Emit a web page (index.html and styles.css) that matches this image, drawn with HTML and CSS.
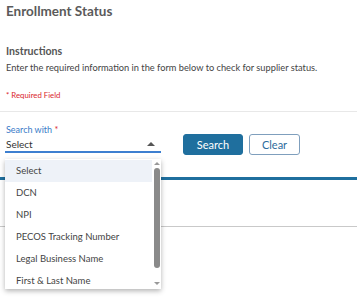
FILE: index.html
```html
<!DOCTYPE html>
<html lang="en">
  <head>
    <meta charset="UTF-8" />
    <title>Enrollment Status</title>
    <link rel="stylesheet" href="styles.css">
  </head>
  <body>
    <h1 class="page-title">Enrollment Status</h1>

    <section class="intro">
      <h2 class="intro-title">Instructions</h2>
      <p class="intro-text">Enter the required information in the form below to check for supplier status.</p>
      <p class="required-note"><span class="star">*</span> Required Field</p>
    </section>

    <form class="search-form">
      <div class="field">
        <label class="field-label">Search with <span class="star">*</span></label>
        <div class="select-box">
          <span class="select-value">Select</span>
          <span class="caret caret-up"></span>
        </div>

        <!-- open option list -->
        <div class="dropdown">
          <ul class="option-list">
            <li class="option active">Select</li>
            <li class="option">DCN</li>
            <li class="option">NPI</li>
            <li class="option">PECOS Tracking Number</li>
            <li class="option">Legal Business Name</li>
            <li class="option">First &amp; Last Name</li>
          </ul>
          <div class="scrollbar">
            <span class="caret caret-up small"></span>
            <span class="thumb"></span>
            <span class="caret caret-down small"></span>
          </div>
        </div>
      </div>
      <div class="actions">
        <button type="button" class="btn btn-primary">Search</button>
        <button type="button" class="btn btn-outline">Clear</button>
      </div>
    </form>

    <div class="results">
      <div class="results-head"></div>
      <div class="results-row"></div>
    </div>
  </body>
</html>
```

FILE: styles.css
```css
*,
*::before,
*::after {
  box-sizing: border-box;
}

html,
body {
  height: 100%;
}

body {
  margin: 0;
  font-family: Lato, "Open Sans", sans-serif;
  color: #444;
  background: #fff;
}

.star {
  color: #d9262b;
}

.page-title {
  margin: 0;
  padding: 3px 6px 0;
  font-size: 13.5px;
  line-height: 17px;
  font-weight: 700;
  color: #5a5a5a;
}

.intro {
  height: 92px;
  padding: 0 6px;
  border-bottom: 1px solid #e8e8e8;
}

.intro-title {
  margin: 0;
  padding-top: 24px;
  font-size: 10.6px;
  line-height: 14px;
  font-weight: 700;
  color: #555;
}

.intro-text {
  margin: 3px 0 0;
  font-size: 9.25px;
  line-height: 14px;
  color: #444;
}

.required-note {
  margin: 14px 0 0;
  font-size: 7.8px;
  line-height: 12px;
  color: #d9262b;
}

.search-form {
  display: flex;
  align-items: flex-start;
  padding: 12px 5px 0;
}

.field {
  position: relative;
  width: 156px;
}

.field-label {
  display: block;
  padding-left: 1px;
  font-size: 9px;
  line-height: 12px;
  color: #3a7bc8;
}

.select-box {
  display: flex;
  align-items: center;
  justify-content: space-between;
  height: 17px;
  padding: 0 6px 0 1px;
  border-bottom: 2px solid #3d7fd0;
  font-size: 10px;
  color: #333;
}

.caret {
  width: 0;
  height: 0;
  border-left: 4px solid transparent;
  border-right: 4px solid transparent;
}

.caret-up {
  border-bottom: 4px solid #555;
}

.caret-down {
  border-top: 4px solid #555;
}

.caret.small {
  border-left-width: 3px;
  border-right-width: 3px;
  border-bottom-color: #999;
  border-top-color: #999;
}

.caret-up.small {
  border-bottom-width: 3px;
}

.caret-down.small {
  border-top-width: 3px;
}

.dropdown {
  position: absolute;
  top: 35px;
  left: 0;
  z-index: 2;
  display: flex;
  width: 156px;
  height: 130px;
  background: #fff;
  box-shadow: 0 2px 5px rgba(0, 0, 0, 0.3);
  overflow: hidden;
}

.option-list {
  flex: 1;
  margin: 0;
  padding: 1px 0 0;
  list-style: none;
}

.option {
  height: 22px;
  padding-left: 11px;
  font-size: 9.5px;
  line-height: 22px;
  color: #444;
}

.option.active {
  background: #eef2f8;
}

.scrollbar {
  display: flex;
  flex-direction: column;
  align-items: center;
  width: 9px;
  padding: 3px 0 4px;
  background: #fff;
}

.thumb {
  width: 6px;
  height: 100px;
  margin: 3px 0 auto;
  border-radius: 3px;
  background: #8a8a8a;
}

.actions {
  display: flex;
  gap: 6px;
  padding: 10px 0 0 22px;
}

.btn {
  height: 21px;
  padding: 0;
  border-radius: 3px;
  font-family: Lato, "Open Sans", sans-serif;
  font-size: 11px;
  cursor: pointer;
}

.btn-primary {
  width: 60px;
  background: #1f6f9e;
  border: 1px solid #1f6f9e;
  color: #fff;
}

.btn-outline {
  width: 51px;
  background: #fff;
  border: 1px solid #7f9fbd;
  color: #2d6c9c;
}

.results {
  margin-top: 22px;
}

.results-head {
  height: 3px;
  background: #1f6f9e;
}

.results-row {
  height: 47px;
  border-bottom: 1px solid #c9c9c9;
}
```
